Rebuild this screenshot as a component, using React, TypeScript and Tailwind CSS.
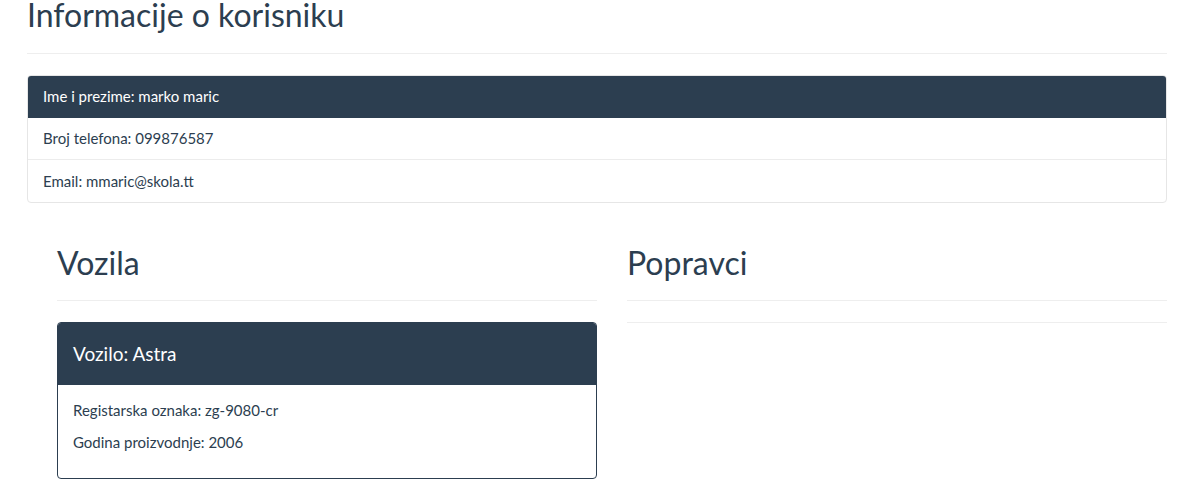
const font = { fontFamily: "Lato, 'Noto Sans', sans-serif" };

const ListRow = ({ children, last }: { children: React.ReactNode; last?: boolean }) => (
  <div
    className={`h-[42px] px-[15px] flex items-center text-[15px] text-[#2c3e50] ${
      last ? "" : "border-b border-[#ececec]"
    }`}
  >
    {children}
  </div>
);

const SectionTitle = ({ title }: { title: string }) => (
  <div className="pt-[42px] pb-[19px] border-b border-[#eeeeee]">
    <h2 className="text-[32px] leading-[36px] text-[#2c3e50]">{title}</h2>
  </div>
);

export default function App() {
  return (
    <div className="min-h-[495px] bg-white" style={font}>
      <div className="ml-[27px] w-[1140px]">
        <div className="border-b border-[#eeeeee] pb-[24px]">
          <h1 className="text-[32px] leading-[29px] text-[#2c3e50]">
            Informacije o korisniku
          </h1>
        </div>

        <div className="mt-[21px] rounded-[4px] border border-[#e6e6e6] overflow-hidden">
          <div className="h-[43px] -mt-px -mx-px px-[16px] flex items-center bg-[#2c3e50] text-white text-[15px] rounded-t-[4px]">
            Ime i prezime: marko maric
          </div>
          <ListRow>Broj telefona: 099876587</ListRow>
          <ListRow last>Email: mmaric@skola.tt</ListRow>
        </div>

        <div className="flex gap-[30px] pl-[30px]">
          <div className="w-[540px]">
            <SectionTitle title="Vozila" />
            <div className="mt-[21px] rounded-[4px] border border-[#2c3e50] overflow-hidden">
              <div className="h-[62px] px-[15px] flex items-center bg-[#2c3e50] text-white text-[19px]">
                Vozilo: Astra
              </div>
              <div className="px-[15px] pt-[15px] pb-[25px] text-[15px] text-[#2c3e50]">
                <p className="leading-[21px] mb-[11px]">Registarska oznaka: zg-9080-cr</p>
                <p className="leading-[21px]">Godina proizvodnje: 2006</p>
              </div>
            </div>
          </div>
          <div className="w-[540px]">
            <SectionTitle title="Popravci" />
            <div className="mt-[21px] border-t border-[#eeeeee]" />
          </div>
        </div>
      </div>
    </div>
  );
}
